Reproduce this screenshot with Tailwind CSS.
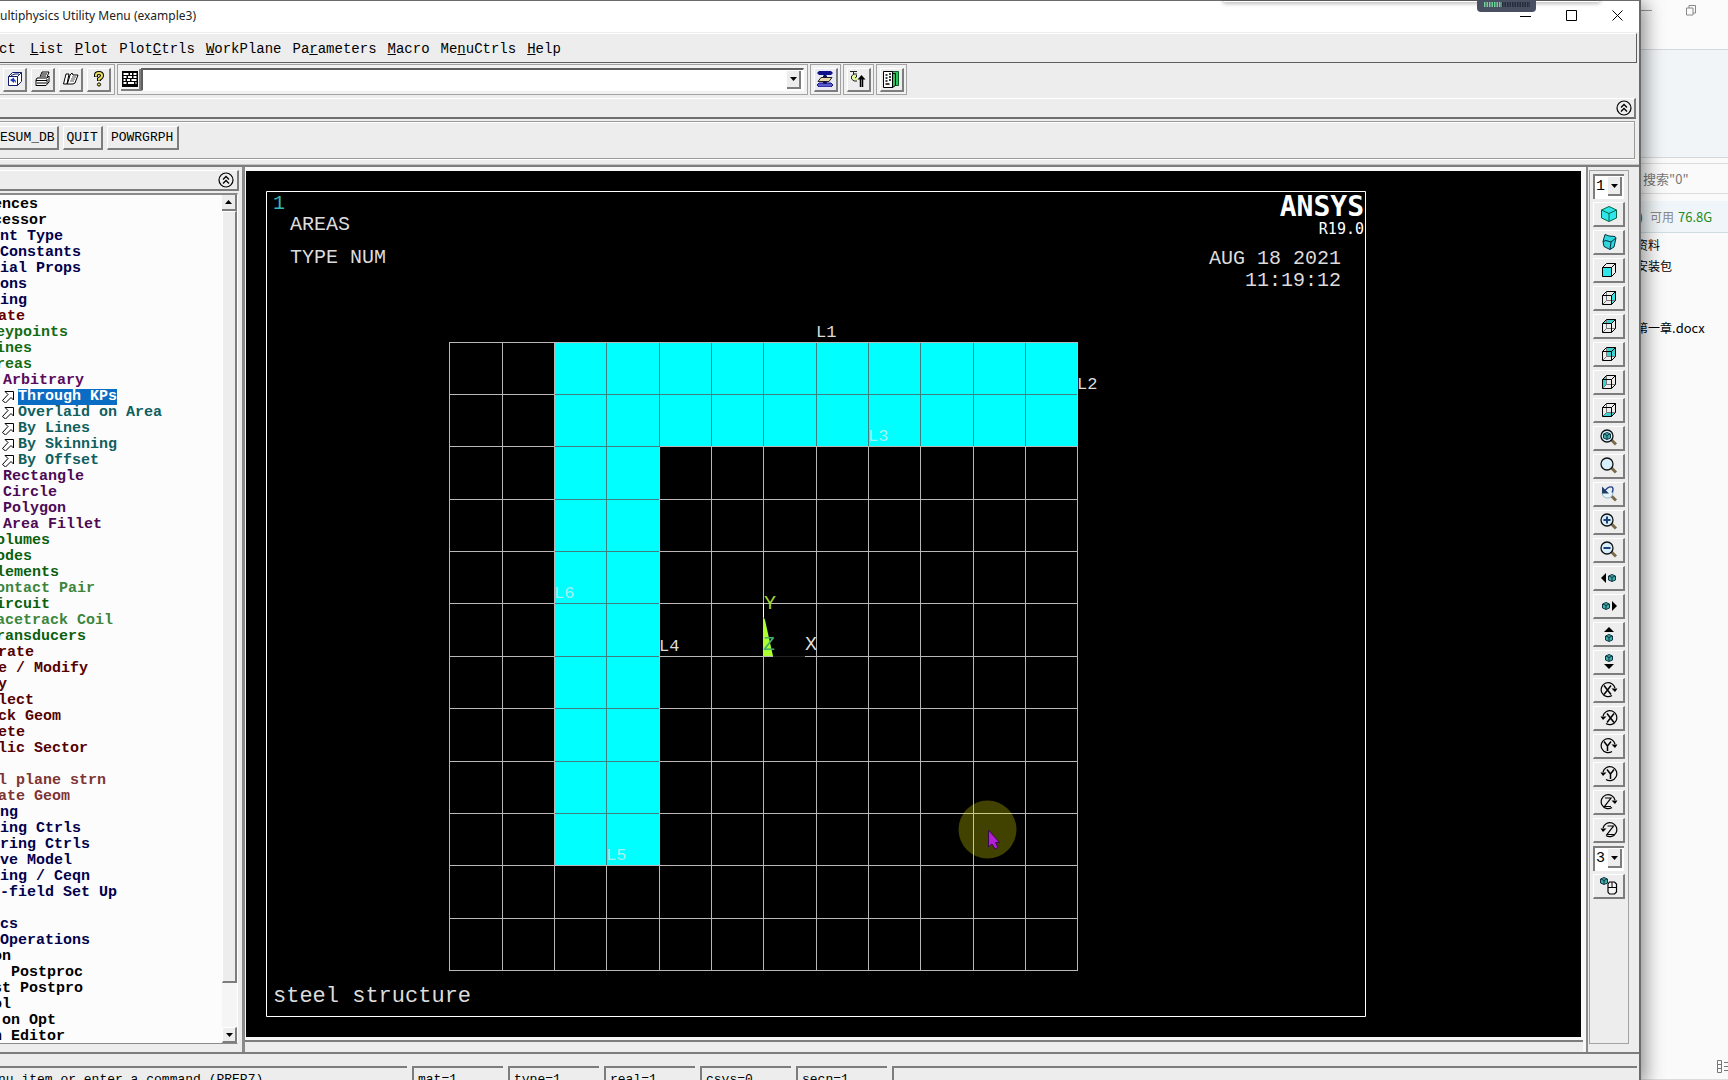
<!DOCTYPE html>
<html lang="en">
<head>
<meta charset="utf-8">
<title>Multiphysics Utility Menu (example3)</title>
<script src="https://cdn.jsdelivr.net/npm/@tailwindcss/browser@4"></script>
</head>
<body class="h-screen overflow-hidden bg-[#fafafa] text-black font-['Liberation_Mono','Noto_Sans_CJK_SC',monospace]">

<!-- Shared icon shapes -->
<svg class="hidden" aria-hidden="true">
  <defs>
    <symbol id="wire" viewBox="0 0 16 16"><path d="M1.5 5.5h9v9h-9zM5.500 1.500h9v9M1.500 5.500l4-4M10.500 5.500l4-4M10.500 14.500l4-4" fill="none" stroke="#000"/></symbol>
    <symbol id="hidden-edges" viewBox="0 0 16 16"><path d="M5.500 1.500v9h9M1.500 14.500l4-4" fill="none" stroke="#777"/></symbol>
    <symbol id="mini" viewBox="0 0 8 8"><path d="M4 .5L7.500 2v4L4 7.500.5 6V2z" fill="#3fb0a8" stroke="#134"/><path d="M1 2l3 1.500L7 2M4 3.500V7" fill="none" stroke="#134"/></symbol>
    <symbol id="lens" viewBox="0 0 18 18"><path d="M11.500 11l4.500 4.500" stroke="#7a6a4a" stroke-width="3"/><circle cx="7" cy="7" r="6" fill="#d6effa" stroke="#111" stroke-width="1.300"/></symbol>
    <symbol id="cw" viewBox="0 0 18 18"><path d="M15 7A7 7 0 1 0 12 14.500" fill="none" stroke="#000" stroke-width="1.200"/><path d="M11.500 7.500h6L15 11z"/></symbol>
    <symbol id="ccw" viewBox="0 0 18 18"><path d="M3 7A7 7 0 1 1 6 14.500" fill="none" stroke="#000" stroke-width="1.200"/><path d="M.5 7.500h6L3 11z"/></symbol>
    <symbol id="collapse" viewBox="0 0 16 16"><circle cx="8" cy="8" r="7" fill="none" stroke="#000" stroke-width="1.200"/><path d="M5 7.500l3-3 3 3M5 11.500l3-3 3 3" fill="none" stroke="#000" stroke-width="1.300"/></symbol>
    <symbol id="arrow" viewBox="0 0 12 12"><path d="M3 .5h8.500V9L9 6.500 3.500 12 .5 9.500 6 3.500z" fill="#fff" stroke="#000"/></symbol>
    <symbol id="down" viewBox="0 0 7 4"><path d="M0 0h7L3.500 4z"/></symbol>
    <symbol id="up" viewBox="0 0 7 4"><path d="M0 4h7L3.500 0z"/></symbol>
  </defs>
</svg>

<div class="flex h-full">
  <div class="relative z-10 flex h-full min-w-0 flex-1 flex-col border-t border-r-2 border-[#6b6b6b] bg-[#ededed] shadow-[2px_4px_18px_2px_rgba(0,0,0,0.45)]">

    <!-- Title bar -->
    <header class="relative flex h-[31px] shrink-0 items-center justify-between bg-white pr-4 font-['Noto_Sans',sans-serif] text-[12px] text-[#222]">
      <h1 class="-mt-px whitespace-nowrap">ultiphysics Utility Menu (example3)</h1>
      <div class="-mt-[2px] flex gap-[35px]">
        <button aria-label="Minimize"><svg class="h-[11px] w-[11px]" viewBox="0 0 11 11"><path d="M0 6.500h11" stroke="#000"/></svg></button>
        <button aria-label="Maximize"><svg class="h-[11px] w-[11px]" viewBox="0 0 11 11"><path d="M.5.5h10v10H.5z" fill="none" stroke="#000"/></svg></button>
        <button aria-label="Close"><svg class="h-[11px] w-[11px]" viewBox="0 0 11 11"><path d="M.5.5l10 10M10.500.5l-10 10" stroke="#000"/></svg></button>
      </div>
      <div class="absolute right-[40px] top-0 h-px w-[375px] shadow-[0_0_4px_1px_rgba(0,0,0,0.4)]"></div>
      <svg class="absolute -top-px right-[103px] h-[12px] w-[59px]" viewBox="0 0 59 12"><path d="M0 0h59v8q0 4-4 4H4q-4 0-4-4z" fill="#485062"/><path d="M7 4.500h18" stroke="#6fcf97" stroke-width="5" stroke-dasharray="1.500 1"/><path d="M25 4.500h28" stroke="#252c3a" stroke-width="5" stroke-dasharray="1.500 1"/></svg>
    </header>

    <!-- Menu bar -->
    <nav class="mr-[2px] mt-px flex h-[30px] shrink-0 items-center gap-[11px] border-t border-b border-r border-t-white border-b-[#5f5f5f] border-r-[#5f5f5f] pt-[3px] text-[14px]">
      <a href="#" class="-ml-px w-[20px]">ct</a>
      <a href="#"><u>L</u>ist</a>
      <a href="#"><u>P</u>lot</a>
      <a href="#">Plot<u>C</u>trls</a>
      <a href="#"><u>W</u>orkPlane</a>
      <a href="#">Pa<u>r</u>ameters</a>
      <a href="#"><u>M</u>acro</a>
      <a href="#">Me<u>n</u>uCtrls</a>
      <a href="#"><u>H</u>elp</a>
    </nav>

    <!-- Icon toolbar -->
    <div class="flex h-[35px] shrink-0 gap-[2px] pt-px">
      <div class="flex h-[31px] w-[115px] items-center gap-1 border border-l-0 border-[#a3a3a3] bg-[#f2f2f2] pl-[3px]">
        <button aria-label="Save" class="flex h-6 w-6 items-center justify-center border border-r-2 border-b-2 border-white border-r-[#7d7d7d] border-b-[#7d7d7d] bg-[#ededed]"><svg class="h-4 w-4" viewBox="0 0 16 16"><path d="M1.500 5.500l4-4h9v9l-4 4h-9z" fill="#fff" stroke="#111a6b"/><path d="M1.500 5.500h9v9M10.500 5.500l4-4M4 4.500l4-1.500h4" fill="none" stroke="#111a6b"/><path d="M3 9l4-2.500v1.700q2 0 2 4-1-2-2-2v1.700z" fill="#223bb0"/></svg></button>
        <button aria-label="Print" class="flex h-6 w-6 items-center justify-center border border-r-2 border-b-2 border-white border-r-[#7d7d7d] border-b-[#7d7d7d] bg-[#ededed]"><svg class="h-4 w-4" viewBox="0 0 16 16"><path d="M5 6l2-5h7l-2 5M2 7h10l2-2v6l-3 3.500H1V9z" fill="#fff" stroke="#000"/><path d="M7 3h5M6 5h5M1 9.500h11M2 12h9M12 8v5" stroke="#000" fill="none"/></svg></button>
        <button aria-label="Report" class="flex h-6 w-6 items-center justify-center border border-r-2 border-b-2 border-white border-r-[#7d7d7d] border-b-[#7d7d7d] bg-[#ededed]"><svg class="h-4 w-4" viewBox="0 0 16 16"><path d="M3 3h3L4 13H.5zM7 4l2-2 1 2h5l-3 8-2 1H4l1-2z" fill="#fff" stroke="#000"/><path d="M9 6h4M8 8h4M7 10h4" stroke="#555"/></svg></button>
        <button aria-label="Help" class="flex h-6 w-6 items-center justify-center border border-r-2 border-b-2 border-white border-r-[#7d7d7d] border-b-[#7d7d7d] bg-[#ededed]"><svg class="h-4 w-4" viewBox="0 0 16 16"><path d="M5 6V4q0-2 3-2t3 2.500q0 2-3 3.500v2" fill="none" stroke="#000" stroke-width="4"/><path d="M5 5.500V4q0-2 3-2t3 2.500q0 2-3 3.500v1.500" fill="none" stroke="#e9df5e" stroke-width="2"/><circle cx="8" cy="13.500" r="1.600" fill="#e9df5e" stroke="#000"/></svg></button>
      </div>
      <div class="flex h-[31px] w-[691px] items-center border border-[#a3a3a3] bg-[#f2f2f2] px-[3px]">
        <button aria-label="Command window" class="flex h-[22px] w-5 shrink-0 items-center justify-center border-b-2 border-r-2 border-[#7d7d7d]"><svg class="h-4 w-4" viewBox="0 0 16 16"><path d="M0 0h16v16H0z"/><path d="M1.500 3h5M8 3h2M11.500 3h3M1.500 6h3M6 6h4M11.500 6h3M1.500 9h2M5 9h3M9.500 9h5M1.500 12h3M6 12h6M13.500 12h1" stroke="#fff" stroke-width="2"/></svg></button>
        <div class="flex h-[23px] flex-1 items-center border border-t-2 border-l-2 border-white border-l-[#5f5f5f] border-t-[#5f5f5f] bg-white pr-[2px]">
          <input type="text" aria-label="Command" class="h-full min-w-0 flex-1 bg-white px-1 text-[14px] outline-none">
          <button aria-label="Command history" class="flex h-[18px] w-[14px] items-center justify-center border-r-2 border-b-2 border-[#7d7d7d] bg-[#ededed]"><svg class="h-1 w-[7px]"><use href="#down"/></svg></button>
        </div>
      </div>
      <div class="flex h-[31px] w-[31px] items-center justify-center border border-[#a3a3a3] bg-[#f2f2f2]"><button aria-label="Raise hidden" class="flex h-6 w-6 items-center justify-center border border-r-2 border-b-2 border-white border-r-[#7d7d7d] border-b-[#7d7d7d] bg-[#e9e9f3]"><svg class="h-4 w-4" viewBox="0 0 16 16"><path d="M2 0h12l2 2-2 2H2L0 2z" fill="#10108a"/><path d="M4 6.500h11l-3 4H1z" fill="#ead9a8" stroke="#222"/><path d="M2 12h12l2 2-2 2H2l-2-2z" fill="#5a5ac8" stroke="#10108a"/><path d="M8 4v3M8 10v3M6 5.500h4M6 11.500h4" stroke="#111155" stroke-width="2"/></svg></button></div>
      <div class="flex h-[31px] w-[31px] items-center justify-center border border-[#a3a3a3] bg-[#f2f2f2]"><button aria-label="Reset picking" class="flex h-6 w-6 items-center justify-center border border-r-2 border-b-2 border-white border-r-[#7d7d7d] border-b-[#7d7d7d] bg-[#ededed]"><svg class="h-4 w-4" viewBox="0 0 16 16"><path d="M0 .5h7M3.500 1v2" stroke="#222"/><path d="M7 3H4L1.500 5v3L4 10h3M6.500 4v2L5 7" fill="#dff5a0" stroke="#223"/><path d="M10.500 16V7M12.500 16V7" stroke="#000" stroke-width="1.500"/><path d="M7.500 8.500l4-4.500L15.500 8.500z"/></svg></button></div>
      <div class="flex h-[31px] w-[31px] items-center justify-center border border-[#a3a3a3] bg-[#f2f2f2]"><button aria-label="Contact manager" class="flex h-6 w-6 items-center justify-center border border-r-2 border-b-2 border-white border-r-[#7d7d7d] border-b-[#7d7d7d] bg-[#ededed]"><svg class="h-[17px] w-4" viewBox="0 0 16 17"><path d="M9 .500h6.500v14H12" fill="#2fc45e" stroke="#0b5a2a"/><path d="M.5.500h9v16h-9z" fill="#fff" stroke="#000"/><path d="M9.500 2.500h3v12l-3 2z" fill="#2fc45e" stroke="#000"/><path d="M2.500 4h2M6 3h2M2.500 7h2M6 6h2M2.500 10h2M6 9h2M2.500 13h4" stroke="#000" stroke-width="1.300"/></svg></button></div>
    </div>

    <!-- Toolbar caption -->
    <div class="mr-[3px] flex h-[21px] shrink-0 items-center justify-end border-t border-r-2 border-b-2 border-t-white border-r-[#7d7d7d] border-b-[#6e6e6e] pr-[2px]">
      <button aria-label="Collapse toolbar"><svg class="block h-4 w-4"><use href="#collapse"/></svg></button>
    </div>

    <!-- Abbreviation toolbar -->
    <div class="mr-1 mt-[2px] flex h-[38px] shrink-0 gap-1 border-t border-r border-b border-[#9a9a9a] pt-1 text-[13px] shadow-[0_1px_0_#fff,inset_0_1px_0_#fff]">
      <button class="-ml-1 h-6 border border-r-2 border-b-2 border-white border-r-[#7d7d7d] border-b-[#7d7d7d] pl-[3px] pr-[2px] pt-px">ESUM_DB</button>
      <button class="h-6 w-10 border border-r-2 border-b-2 border-white border-r-[#7d7d7d] border-b-[#7d7d7d] pt-px">QUIT</button>
      <button class="h-6 w-[72px] border border-r-2 border-b-2 border-white border-r-[#7d7d7d] border-b-[#7d7d7d] pt-px">POWRGRPH</button>
    </div>
    <div class="mt-[5px] h-[3px] shrink-0 border-t border-b-2 border-t-[#c4c4c4] border-b-[#7d7d7d]"></div>

    <main class="flex min-h-0 flex-1">
      <!-- Main menu tree -->
      <aside class="flex w-[243px] shrink-0 flex-col border-r border-[#8a8a8a] pr-[3px] pt-[3px]">
        <div class="flex h-[21px] shrink-0 items-center justify-end border-t border-r-2 border-b-2 border-t-white border-r-[#7d7d7d] border-b-[#7d7d7d] pr-[3px]">
          <button aria-label="Collapse menu"><svg class="block h-4 w-4"><use href="#collapse"/></svg></button>
        </div>
        <div class="mb-2 mr-px mt-[2px] flex min-h-0 flex-1 border-t-2 border-b border-r border-t-[#8a8a8a] border-b-[#8a8a8a] border-r-white bg-[#fcfcfc]">
          <ul class="min-w-0 flex-1 overflow-hidden whitespace-nowrap pt-[2px] text-[15px] leading-4 font-bold text-[#00004c]">
            <li class="-ml-[7px] h-4 text-black">ences</li>
            <li class="-ml-[7px] h-4 text-black">cessor</li>
            <li class="h-4">nt Type</li>
            <li class="h-4">Constants</li>
            <li class="h-4">ial Props</li>
            <li class="h-4">ons</li>
            <li class="h-4">ing</li>
            <li class="-ml-[2px] h-4 text-[#640000]">ate</li>
            <li class="-ml-1 h-4 text-[#136b13]">eypoints</li>
            <li class="-ml-1 h-4 text-[#136b13]">ines</li>
            <li class="-ml-1 h-4 text-[#136b13]">reas</li>
            <li class="ml-[3px] h-4 text-[#5a0a5f]">Arbitrary</li>
            <li class="flex h-4 items-center gap-1 pl-[2px] text-[#0f5f60]"><svg class="h-3 w-3"><use href="#arrow"/></svg><a href="#" class="h-4 bg-[#0b6cc4] text-white">Through KPs</a></li>
            <li class="flex h-4 items-center gap-1 pl-[2px] text-[#0f5f60]"><svg class="h-3 w-3"><use href="#arrow"/></svg><a href="#">Overlaid on Area</a></li>
            <li class="flex h-4 items-center gap-1 pl-[2px] text-[#0f5f60]"><svg class="h-3 w-3"><use href="#arrow"/></svg><a href="#">By Lines</a></li>
            <li class="flex h-4 items-center gap-1 pl-[2px] text-[#0f5f60]"><svg class="h-3 w-3"><use href="#arrow"/></svg><a href="#">By Skinning</a></li>
            <li class="flex h-4 items-center gap-1 pl-[2px] text-[#0f5f60]"><svg class="h-3 w-3"><use href="#arrow"/></svg><a href="#">By Offset</a></li>
            <li class="ml-[3px] h-4 text-[#4c0a55]">Rectangle</li>
            <li class="ml-[3px] h-4 text-[#4c0a55]">Circle</li>
            <li class="ml-[3px] h-4 text-[#4c0a55]">Polygon</li>
            <li class="ml-[3px] h-4 text-[#4c0a55]">Area Fillet</li>
            <li class="-ml-1 h-4 text-[#0a5f0f]">olumes</li>
            <li class="-ml-1 h-4 text-[#0a5f0f]">odes</li>
            <li class="-ml-1 h-4 text-[#0a5f0f]">lements</li>
            <li class="-ml-1 h-4 text-[#3c853c]">ontact Pair</li>
            <li class="-ml-1 h-4 text-[#0a5f0f]">ircuit</li>
            <li class="-ml-1 h-4 text-[#3c853c]">acetrack Coil</li>
            <li class="-ml-1 h-4 text-[#0a5f0f]">ransducers</li>
            <li class="-ml-[2px] h-4 text-[#540000]">rate</li>
            <li class="-ml-[2px] h-4 text-[#540000]">e / Modify</li>
            <li class="-ml-[2px] h-4 text-[#540000]">y</li>
            <li class="-ml-[2px] h-4 text-[#540000]">lect</li>
            <li class="-ml-[2px] h-4 text-[#540000]">ck Geom</li>
            <li class="-ml-[2px] h-4 text-[#540000]">ete</li>
            <li class="-ml-[2px] h-4 text-[#540000]">lic Sector</li>
            <li class="h-4"></li>
            <li class="-ml-[2px] h-4 text-[#7c3434]">l plane strn</li>
            <li class="-ml-[2px] h-4 text-[#7c3434]">ate Geom</li>
            <li class="h-4">ng</li>
            <li class="h-4">ing Ctrls</li>
            <li class="h-4">ring Ctrls</li>
            <li class="h-4">ve Model</li>
            <li class="h-4">ing / Ceqn</li>
            <li class="h-4">-field Set Up</li>
            <li class="h-4"></li>
            <li class="h-4">cs</li>
            <li class="h-4">Operations</li>
            <li class="-ml-[7px] h-4 text-black">on</li>
            <li class="ml-[11px] h-4 text-black">Postproc</li>
            <li class="-ml-[7px] h-4 text-black">st Postpro</li>
            <li class="-ml-[7px] h-4 text-black">ol</li>
            <li class="ml-[2px] h-4 text-black">on Opt</li>
            <li class="-ml-[7px] h-4 text-black">n Editor</li>
          </ul>
          <div class="flex w-[15px] flex-col bg-[#f5f5f5]">
            <button aria-label="Scroll up" class="flex h-4 shrink-0 items-center justify-center border-r-2 border-b-2 border-[#7d7d7d] bg-[#ededed]"><svg class="h-1 w-[7px]"><use href="#up"/></svg></button>
            <div class="flex-1 border border-r-2 border-b-2 border-white border-r-[#7d7d7d] border-b-[#7d7d7d] bg-[#ededed]"></div>
            <div class="h-11 shrink-0"></div>
            <button aria-label="Scroll down" class="flex h-4 shrink-0 items-center justify-center border border-r-2 border-b-2 border-white border-r-[#7d7d7d] border-b-[#7d7d7d] bg-[#ededed]"><svg class="h-1 w-[7px]"><use href="#down"/></svg></button>
          </div>
        </div>
      </aside>

      <!-- Graphics window -->
      <section class="flex min-w-0 flex-1 flex-col border-l-2 border-[#8a8a8a] bg-[#f8f8f8] pt-1">
        <div class="ml-px mr-[5px] min-h-0 flex-1 bg-black">
          <svg class="block h-full w-full font-['Liberation_Mono',monospace]" viewBox="246 171 1335 866" preserveAspectRatio="xMinYMin meet" fill="#dcdcdc">
            <path d="M266.500 191.500h1099v825h-1099z" fill="none" stroke="#fff"/>
            <path d="M449.500 342v629M502.500 342v629M554.500 342v629M606.500 342v629M659.500 342v629M711.500 342v629M763.500 342v629M816.500 342v629M868.500 342v629M920.500 342v629M973.500 342v629M1025.500 342v629M1077.500 342v629M449 342.500h629M449 394.500h629M449 446.500h629M449 499.500h629M449 551.500h629M449 603.500h629M449 656.500h629M449 708.500h629M449 761.500h629M449 813.500h629M449 865.500h629M449 918.500h629M449 970.500h629" fill="none" stroke="#b8b8b8"/>
            <path d="M555 343h522v103H659v419H555z" fill="#00ffff"/>
            <path d="M606.500 343v522M659.500 343v103M711.500 343v103M763.500 343v103M816.500 343v103M868.500 343v103M920.500 343v103M973.500 343v103M1025.500 343v103M555 394.500h522M555 446.500h105M555 499.500h104M555 551.500h104M555 603.500h104M555 656.500h104M555 708.500h104M555 761.500h104M555 813.500h104" fill="none" stroke="#3f7f7f"/>
            <path d="M763 616l2 4 8 36h-10z" fill="#adff2f"/>
            <path d="M773 656.500h32" stroke="#222"/>
            <path d="M763.500 603v14" stroke="#fff"/>
            <text x="273" y="209" font-size="20" fill="#36b8b8">1</text>
            <text x="290" y="230" font-size="20">AREAS</text>
            <text x="290" y="263" font-size="20">TYPE NUM</text>
            <text x="1341" y="264" font-size="20" text-anchor="end">AUG 18 2021</text>
            <text x="1341" y="286" font-size="20" text-anchor="end">11:19:12</text>
            <text x="1364" y="216" font-size="28" font-weight="bold" text-anchor="end" fill="#fff" class="font-['DejaVu_Sans_Mono',monospace]">ANSYS</text>
            <text x="1364" y="234" font-size="15" text-anchor="end" fill="#fff" class="font-['DejaVu_Sans_Mono',monospace]">R19.0</text>
            <text x="273" y="1002" font-size="22">steel structure</text>
            <g font-size="17">
              <text x="816" y="337">L1</text>
              <text x="1077" y="389">L2</text>
              <text x="868" y="441" fill="#9ff3f3">L3</text>
              <text x="659" y="651">L4</text>
              <text x="606" y="860" fill="#9ff3f3">L5</text>
              <text x="554" y="598" fill="#9ff3f3">L6</text>
            </g>
            <g font-size="20">
              <text x="805" y="650">X</text>
              <text x="764" y="609" fill="#a4d62f">Y</text>
              <text x="763" y="650" fill="#3fae6c">Z</text>
            </g>
            <circle cx="987.500" cy="829.500" r="29" fill="#ffff00" fill-opacity=".26"/>
            <path d="M988.500 830v17l3.500-3 3 5 3-1.500-2.500-5h4z" fill="#b31fd6" stroke="#3a0a48"/>
          </svg>
        </div>
        <div class="mr-[3px] mt-[3px] h-3 shrink-0 border-t-2 border-[#7d7d7d] bg-[#ededed]"></div>
      </section>

      <!-- View control strip -->
      <div class="mr-[10px] flex w-[43px] shrink-0 border-l-2 border-[#8a8a8a] pb-2 pl-px pt-[3px]">
        <div class="flex w-10 flex-col gap-[3px] border border-[#a3a3a3] px-[3px] pt-[3px] [&_button]:flex [&_button]:h-[25px] [&_button]:w-8 [&_button]:shrink-0 [&_button]:items-center [&_button]:justify-center [&_button]:border [&_button]:border-r-2 [&_button]:border-b-2 [&_button]:border-white [&_button]:border-r-[#7d7d7d] [&_button]:border-b-[#7d7d7d] [&_svg]:shrink-0">
          <div class="relative h-[25px] w-[31px] shrink-0 border-t-2 border-l-2 border-[#7d7d7d] bg-white">
            <select aria-label="Active window" class="block h-full w-full appearance-none pl-px text-[15px] outline-none"><option>1</option></select>
            <span class="pointer-events-none absolute right-[2px] top-px flex h-[19px] w-[14px] items-center justify-center border-r-2 border-b-2 border-[#7d7d7d] bg-[#ededed]"><svg class="h-1 w-[7px]"><use href="#down"/></svg></span>
          </div>
          <button aria-label="Isometric view"><svg class="h-4 w-4" viewBox="0 0 16 16"><path d="M8 .5L15.500 4v8L8 15.500.5 12V4z" fill="#2fe6ea" stroke="#064"/><path d="M.5 4L8 7.500 15.500 4M8 7.500v8" fill="none" stroke="#064"/></svg></button>
          <button aria-label="Oblique view"><svg class="h-4 w-4" viewBox="0 0 16 16"><path d="M4 .5l4 1.500 6 .5 1 1.500-2 9-4 2.500-6-3-1-5z" fill="#2fd6dc" stroke="#034"/><path d="M2 7.500l3-1 5 1.500 5-4M10 8l-1 7.500" fill="none" stroke="#034"/></svg></button>
          <button aria-label="Front view"><svg class="h-4 w-4" viewBox="0 0 16 16"><path d="M1 5h10v10H1z" fill="#2fe6ea"/><use href="#wire"/></svg></button>
          <button aria-label="Right view"><svg class="h-4 w-4" viewBox="0 0 16 16"><path d="M10.500 5.500l4-4v9l-4 4z" fill="#3fe0e0"/><use href="#hidden-edges"/><use href="#wire"/></svg></button>
          <button aria-label="Top view"><svg class="h-4 w-4" viewBox="0 0 16 16"><path d="M1.500 5.500l4-4h9l-4 4z" fill="#3fd0d0"/><use href="#hidden-edges"/><use href="#wire"/></svg></button>
          <button aria-label="Back view"><svg class="h-4 w-4" viewBox="0 0 16 16"><path d="M5.500 1.500h9v9h-9z" fill="#3fd0d0"/><use href="#hidden-edges"/><use href="#wire"/></svg></button>
          <button aria-label="Left view"><svg class="h-4 w-4" viewBox="0 0 16 16"><path d="M1.500 5.500l4-4v9l-4 4z" fill="#3fd0d0"/><use href="#hidden-edges"/><use href="#wire"/></svg></button>
          <button aria-label="Bottom view"><svg class="h-4 w-4" viewBox="0 0 16 16"><path d="M1.500 14.500l4-4h9l-4 4z" fill="#3fd0d0"/><use href="#hidden-edges"/><use href="#wire"/></svg></button>
          <button aria-label="Fit view"><svg class="h-[18px] w-[18px]" viewBox="0 0 18 18"><use href="#lens"/><use href="#mini" x="3" y="3" width="8" height="8"/></svg></button>
          <button aria-label="Zoom model"><svg class="h-[18px] w-[18px]" viewBox="0 0 18 18"><use href="#lens"/></svg></button>
          <button aria-label="Back up zoom"><svg class="h-[18px] w-[18px]" viewBox="0 0 18 18"><path d="M11.500 11l4.500 4.500" stroke="#7a6a4a" stroke-width="3"/><path d="M2 8q1 5 5.500 5T13 8V3" fill="#e4f2fa" stroke="#9bb4c8"/><path d="M4 7q4-6 8-5 2 1.500 0 5.500" fill="none" stroke="#1f3f8a" stroke-width="1.300"/><path d="M2 1.500v7h7z" fill="#1f3f6a"/></svg></button>
          <button aria-label="Zoom in"><svg class="h-[18px] w-[18px]" viewBox="0 0 18 18"><use href="#lens"/><path d="M3.500 7h7M7 3.500v7" stroke="#1f3f7a" stroke-width="2"/></svg></button>
          <button aria-label="Zoom out"><svg class="h-[18px] w-[18px]" viewBox="0 0 18 18"><use href="#lens"/><path d="M3.500 7h7" stroke="#1f3f7a" stroke-width="2"/></svg></button>
          <button aria-label="Pan left"><svg class="h-4 w-4" viewBox="0 0 16 16"><path d="M5 3v10L0 8z"/><use href="#mini" x="7" y="4" width="8" height="8"/></svg></button>
          <button aria-label="Pan right"><svg class="h-4 w-4" viewBox="0 0 16 16"><path d="M11 3v10l5-5z"/><use href="#mini" x="1" y="4" width="8" height="8"/></svg></button>
          <button aria-label="Pan up"><svg class="h-4 w-4" viewBox="0 0 16 16"><path d="M3 6h10L8 1z"/><use href="#mini" x="4" y="8" width="8" height="8"/></svg></button>
          <button aria-label="Pan down"><svg class="h-4 w-4" viewBox="0 0 16 16"><path d="M3 10h10l-5 5z"/><use href="#mini" x="4" y="0" width="8" height="8"/></svg></button>
          <button aria-label="Rotate X clockwise"><svg class="h-[18px] w-[18px]" viewBox="0 0 18 18"><use href="#cw"/><path d="M4 4.500l7 9M11 4.500l-7 9" stroke="#000" stroke-width="1.500"/></svg></button>
          <button aria-label="Rotate X counterclockwise"><svg class="h-[18px] w-[18px]" viewBox="0 0 18 18"><use href="#ccw"/><path d="M7 4.500l7 9M14 4.500l-7 9" stroke="#000" stroke-width="1.500"/></svg></button>
          <button aria-label="Rotate Y clockwise"><svg class="h-[18px] w-[18px]" viewBox="0 0 18 18"><use href="#cw"/><path d="M4 4.500L7.500 9 11 4.500M7.500 9v5" fill="none" stroke="#000" stroke-width="1.500"/></svg></button>
          <button aria-label="Rotate Y counterclockwise"><svg class="h-[18px] w-[18px]" viewBox="0 0 18 18"><use href="#ccw"/><path d="M7 4.500l3.500 4.500L14 4.500M10.500 9v5" fill="none" stroke="#000" stroke-width="1.500"/></svg></button>
          <button aria-label="Rotate Z clockwise"><svg class="h-[18px] w-[18px]" viewBox="0 0 18 18"><use href="#cw"/><path d="M5 5h6l-6.500 8.500H11" fill="none" stroke="#000" stroke-width="1.200"/></svg></button>
          <button aria-label="Rotate Z counterclockwise"><svg class="h-[18px] w-[18px]" viewBox="0 0 18 18"><use href="#ccw"/><path d="M7.500 5h6L7 13.500h7" fill="none" stroke="#000" stroke-width="1.200"/></svg></button>
          <div class="relative h-[25px] w-[31px] shrink-0 border-t-2 border-l-2 border-[#7d7d7d] bg-white">
            <select aria-label="Rotation rate" class="block h-full w-full appearance-none pl-px text-[15px] outline-none"><option>3</option></select>
            <span class="pointer-events-none absolute right-[2px] top-px flex h-[19px] w-[14px] items-center justify-center border-r-2 border-b-2 border-[#7d7d7d] bg-[#ededed]"><svg class="h-1 w-[7px]"><use href="#down"/></svg></span>
          </div>
          <button aria-label="Dynamic model mode"><svg class="h-[18px] w-[18px]" viewBox="0 0 18 18"><use href="#mini" x="0" y="0" width="8" height="8"/><path d="M9.500 5h5l2 2v8l-2 2h-5l-1.500-2V7z" fill="#f5f5f5" stroke="#000" stroke-width="1.200"/><path d="M8 10.500h8.500M12 5v5.500" stroke="#000"/></svg></button>
        </div>
      </div>
    </main>

    <!-- Status bar -->
    <footer class="h-[28px] shrink-0 overflow-hidden border-t-2 border-[#7d7d7d] pt-3">
      <div class="flex h-6 gap-[5px] pr-[2px] text-[13px] leading-6 [&>span]:border-t-2 [&>span]:border-[#7d7d7d] [&>span]:whitespace-pre">
        <span class="w-[407px] shrink-0"><span class="-ml-[2px]">nu item or enter a command (PREP7)</span></span>
        <span class="w-[91px] shrink-0 border-l-2 pl-1">mat=1</span>
        <span class="w-[91px] shrink-0 border-l-2 pl-1">type=1</span>
        <span class="w-[91px] shrink-0 border-l-2 pl-1">real=1</span>
        <span class="w-[91px] shrink-0 border-l-2 pl-1">csys=0</span>
        <span class="w-[91px] shrink-0 border-l-2 pl-1">secn=1</span>
        <span class="flex-1 border-l-2"></span>
      </div>
    </footer>
  </div>

  <!-- File manager window behind -->
  <div class="flex w-[87px] shrink-0 flex-col whitespace-nowrap bg-[#fafafa] font-['Noto_Sans_CJK_SC',sans-serif] text-[12px] leading-5">
    <div class="flex h-[50px] shrink-0 justify-between border-b border-[#d3d8dc] bg-[#fbfbfb] pr-[32px] pt-[5px]">
      <svg class="h-3 w-[11px]" viewBox="0 0 11 12"><path d="M0 5.500h11" stroke="#999"/></svg>
      <svg class="h-[11px] w-[10px]" viewBox="0 0 10 11"><path d="M.5 3h6.500v7H.5zM3 3V.5h6.500V8H7" fill="none" stroke="#888"/></svg>
    </div>
    <div class="h-[108px] shrink-0 border-b border-[#d3d8dc] bg-[#f2f5f7]"></div>
    <div class="mt-[5px] flex h-[31px] shrink-0 items-center border-y border-[#dcdcdc] pl-[2px] text-[13px] text-[#777]">搜索"0"</div>
    <div class="mt-[7px] flex h-8 shrink-0 items-center gap-1 border-b border-[#cfdde2] bg-[#eff5f8] text-[#888]"><span class="-ml-[2px] text-[#333]">)</span><span class="ml-[3px]">可用</span><span class="text-[13px] text-[#228b22]">76.8G</span></div>
    <div class="-ml-[5px] mt-[2px] h-[21px] shrink-0">资料</div>
    <div class="-ml-[5px] h-[62px] shrink-0">安装包</div>
    <div class="-ml-[5px] h-5 shrink-0">第一章<span class="text-[13px]">.docx</span></div>
    <div class="mt-auto flex h-5 shrink-0 justify-end border-b border-[#ddd]"><svg class="h-[13px] w-[11px]" viewBox="0 0 11 13"><path d="M.5.500h4v12h-4zM.5 4.500h4M.5 8.500h4M7 2.500h4M7 6.500h4M7 10.500h4" fill="none" stroke="#777"/></svg></div>
  </div>
</div>
</body>
</html>
